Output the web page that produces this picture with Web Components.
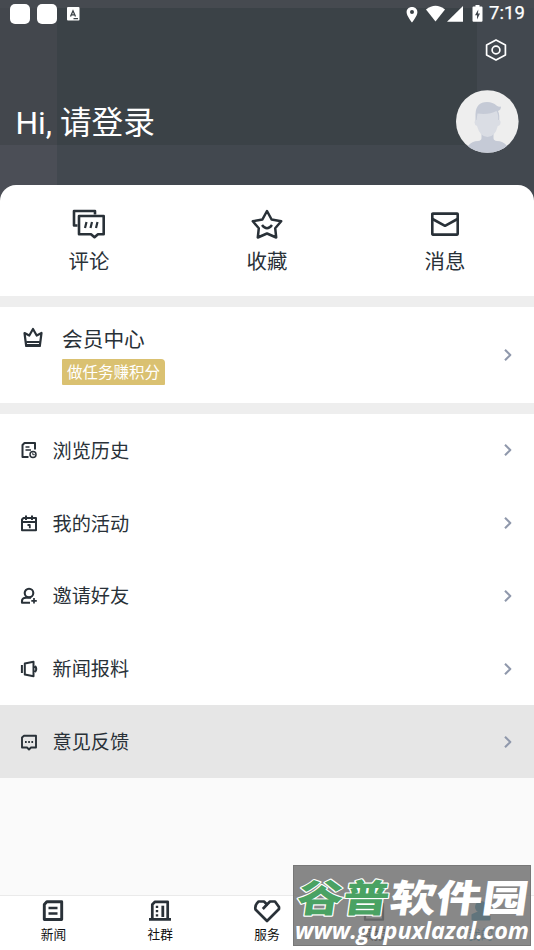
<!DOCTYPE html>
<html lang="zh-CN">
<head>
<meta charset="utf-8">
<title>我的</title>
<style>
body{margin:0;width:534px;height:950px;overflow:hidden;background:#fafafa;color:#293138;font-family:Roboto,"Noto Sans CJK SC",sans-serif}
</style>
</head>
<body>
<profile-page></profile-page>
<script>
const ICONS = {
  comment: ['0 0 34 30', 34, 30, '<path d="M5.500 16.500H2V2H23V5.500"/><path d="M7 7H31.700V25.200H26L22.500 28.200L19 25.200H7Z"/><path d="M14.500 13L13 19M20 13L18.500 19M25.500 13L24 19" stroke-width="2.200"/>', 2.600],
  star: ['0 0 34 30', 34, 30, '<path d="M17 2L21.600 10.500L31.200 12.300L25.200 19.200L26.200 28.500L17 24.500L7.800 28.500L8.800 19.200L2.800 12.300L12.400 10.500Z"/><path d="M12 16Q17 22.500 22 16"/>', 2.5],
  mail: ['0 0 34 30', 34, 30, '<rect x="4.300" y="4.600" width="25.400" height="21" rx=".5"/><path d="M4.500 10L17 16.800L29.500 10"/>', 2.600],
  crown: ['0 0 22 22', 22, 22, '<path d="M4.200 20L2.500 7L7.300 9.500L11 3L14.700 9.500L19.500 7L17.800 20Z"/><path d="M4.200 16H17.800M4.500 19H17.500" stroke-width="1.800"/>', 2.200],
  history: ['0 0 18 18', 18, 18, '<path d="M8.500 16H2.500V4L4.500 2H15V8.500"/><path d="M5.500 6H9.500M5.500 9H11" stroke-width="1.500"/><circle cx="13" cy="13.500" r="3" stroke-width="1.500"/><path d="M12.800 11.500V13.700H14.800" stroke-width="1"/>', 2],
  event: ['0 0 18 18', 18, 18, '<path d="M2 16.200V5.500L3.500 4H16V16.200ZM2 8H16M6 1.500V6M12 1.500V6"/><path d="M7.500 11H9.800V14.200" stroke-width="1.800"/>', 2],
  friend: ['0 0 18 18', 18, 18, '<circle cx="9" cy="6" r="4.300"/><path d="M10 15.800H2V14Q2 10.800 6 10.700H11"/><path d="M14 11V16.500M11.300 13.800H16.800" stroke-width="1.700"/>', 2.1],
  report: ['0 0 18 18', 18, 18, '<path d="M4.800 3.500L13.500 1.800V16.200L4.800 14.500ZM1.900 5V13M15 6Q17.500 9 15 12"/>', 2],
  feedback: ['0 0 18 18', 18, 18, '<path d="M2 14.500V4.500L4 2.800H16V14.500H11L9 16.500L7 14.500Z"/><path d="M5 9H6.700M8.200 9H9.900M11.400 9H13.100" stroke-width="1.800"/>', 1.9],
  news: ['0 0 24 24', 24, 24, '<path d="M3.300 20.500V5.500L5.800 2.800H20.700V20.500Z"/><path d="M7.500 9H16.500M7.500 14.500H16.500" stroke-width="2.400"/>', 2.900],
  group: ['0 0 24 24', 24, 24, '<path d="M4.300 20V5.500L7 2.800H19.700V20M1 20.400H23"/><path d="M9 6.700V18" stroke-dasharray="2.300 2" stroke-width="2.400"/><path d="M14.800 6.700V18" stroke-width="2.800"/>', 2.700],
  heart: ['0 0 28 24', 28, 24, '<path d="M14 22L2.500 10.500Q1.500 6 5.500 2.500H11L14 5.500L17 2.500H22L26 8V10Z"/><path d="M14 5.500L9.800 10"/>', 2.700],
  paper: ['0 0 24 24', 24, 24, '<path d="M3 20.700V5H8L13 2.500V5H21V20.700Z"/><path d="M8 11V16M12 9V16M16 11V14" stroke-width="2"/>', 2.300],
  me: ['0 0 24 24', 24, 24, '<circle cx="12" cy="8" r="5" fill="currentColor"/><path d="M3.500 20.500V16L8 14H16L20.500 16V20.500Z" fill="currentColor"/>', 2],
  chevron: ['0 0 10 14', 10, 14, '<path d="M2 1.800L7.300 7L2 12.200"/>', 2.1],
  settings: ['0 0 24 24', 24, 24, '<path d="M12 1.900L21.400 6.900V17.100L12 22.100L2.600 17.100V6.900Z"/><circle cx="12" cy="12" r="3.900"/>', 1.700]
};

function define(name, css, html) {
  customElements.define(name, class extends HTMLElement {
    connectedCallback() {
      if (this.shadowRoot) return;
      const root = this.attachShadow({mode: 'open'});
      root.innerHTML = '<style>' + css + '</style>' + (typeof html === 'function' ? html(this) : html);
    }
  });
}

define('line-icon', ':host{display:inline-flex;flex:none}svg{display:block;fill:none;stroke:currentColor;stroke-linejoin:round}', el => {
  const [box, w, h, body, sw] = ICONS[el.getAttribute('name')];
  return `<svg viewBox="${box}" width="${w}" height="${h}" stroke-width="${sw}">${body}</svg>`;
});

define('status-bar', `
:host{display:flex;align-items:center;height:27px;padding:0 9px 0 10px;color:#fff;box-sizing:border-box}
.app{width:20px;height:20px;border-radius:5px;background:#fff;margin-right:6.500px}
svg{display:block;flex:none}
.key{margin-left:4px}.space{flex:1}
.time{font:400 18.500px/27px Roboto,sans-serif;letter-spacing:.1px;margin-left:5px;-webkit-text-stroke:.25px #fff}`,
`<span class="app"></span><span class="app"></span>
<svg class="key" width="13" height="14"><rect width="12.500" height="13.500" rx="1" fill="#fff"/><path d="M3.500 9.500L6 3.800L8.500 9.500M4.500 7.800H7.500M6.500 11.700H11" stroke="#3b4247" stroke-width="1.300" fill="none"/></svg>
<span class="space"></span>
<svg width="78" height="20" fill="#fff"><g transform="translate(0 -.5)"><path fill-rule="evenodd" d="M6 3.500C2.800 3.500.6 5.600.6 8.700C.6 12.300 6 19 6 19S11.400 12.300 11.400 8.700C11.400 5.600 9.200 3.500 6 3.500ZM6 6.600A2 2 0 1 1 6 10.600A2 2 0 1 1 6 6.600Z"/><path d="M20 6Q29.500-1.500 39 6L29.500 18Z"/><path d="M57 2.500V18.300H41Z"/><path fill-rule="evenodd" d="M69.500 1.500H73.500V3H75.500Q76.500 3 76.500 4V17.300Q76.500 18.300 75.500 18.300H67.500Q66.500 18.300 66.500 17.300V4Q66.500 3 67.500 3H69.500ZM72.300 6L69 11.700H71V16L74 10H72Z"/></g></svg>
<span class="time">7:19</span>`);

define('user-avatar', ':host{display:block;width:63px;height:63px;flex:none}svg{display:block}',
`<svg width="63" height="63" viewBox="0 0 63 63"><defs><clipPath id="c"><circle cx="31.300" cy="31.500" r="31.300"/></clipPath></defs><g clip-path="url(#c)"><path fill="#eee" d="M0 0H63V63H0Z"/><path fill="#c5cad6" d="M12 64V56Q16 51 22 51Q25.500 50.500 25.500 48V43H37.500V48Q37.500 50.500 41 51Q47 51 51 56V64Z"/><path fill="#c5cad6" d="M19.500 34V24Q20 12 31 12Q37 12 40.500 15.500Q43 17.500 45 16.500Q45 20 42 21Q44 24 43 34Z"/><path fill="#dadde4" d="M21.500 23.500Q33 25 40.500 21Q42.500 24 42.200 30Q44.800 29.500 44.500 33Q44 36 41.800 36Q39 47 31.500 47Q24 47 21 36Q18.700 35.500 18.500 32.500Q18.500 29.500 20.500 30Z"/></g></svg>`);

define('profile-header', `
:host{display:flex;flex-direction:column;height:203px;color:#fff;background:
linear-gradient(#464a50,#464a50) 0 0/534px 8px no-repeat,
linear-gradient(#3b4247,#3b4247) 57px 8px/420px 137px no-repeat,
linear-gradient(#4b4e56,#4b4e56) 0 145px/57px 58px no-repeat,
linear-gradient(#43474d,#43474d) 0 8px/57px 137px no-repeat,#42484f}
.tools{display:flex;justify-content:flex-end;height:46px;padding:11px 26px 0 0;box-sizing:border-box}
.hello{display:flex;align-items:center;justify-content:space-between;height:63px;margin-top:17px;padding:0 15px 0 15.500px}
h1{font-size:31.700px;font-weight:400;line-height:46px;margin:0;padding-top:5px;white-space:nowrap}`,
`<status-bar></status-bar><div class="tools"><line-icon name="settings"></line-icon></div><div class="hello"><h1>Hi, 请登录</h1><user-avatar></user-avatar></div>`);

define('quick-action', `
:host{flex:1;display:flex;flex-direction:column;align-items:center;padding-top:24px;font-size:20.400px;line-height:30px;color:#293138}
.label{margin-top:8px}`,
el => `<line-icon name="${el.getAttribute('icon')}"></line-icon><span class="label"><slot></slot></span>`);

define('quick-actions', ':host{display:flex;height:111px;margin-top:-18px;background:#fff;border-radius:16px 16px 0 0}', '<slot></slot>');

define('member-card', `
:host{display:flex;height:96px;margin:11px 0;background:#fff;padding:0 21px 0 22px;box-sizing:border-box;align-items:center;box-shadow:0 -11px #eee,0 11px #eee}
.crown{align-self:flex-start;margin-top:19px}
.text{flex:1;align-self:flex-start;margin-left:18px;padding-top:18px;display:flex;flex-direction:column;align-items:flex-start}
.name{font-size:20.700px;line-height:30px}
.tag{margin-top:4px;background:#dac171;color:#fff;font-size:15.500px;line-height:28px;height:26px;padding:0 5px;border-radius:1px 4px 1px 1px}
.arrow{color:#9099ac}`,
`<line-icon class="crown" name="crown"></line-icon><div class="text"><span class="name">会员中心</span><span class="tag">做任务赚积分</span></div><line-icon class="arrow" name="chevron"></line-icon>`);

define('menu-row', `
:host{display:flex;align-items:center;height:72.800px;padding:0 21px 0 20px;box-sizing:border-box;background:#fff;font-size:19.200px;line-height:28px}
:host([pressed]){background:#e6e6e6}
.label{flex:1;margin-left:14.500px;padding-top:3px}.arrow{color:#9099ac}`,
el => `<line-icon name="${el.getAttribute('icon')}"></line-icon><span class="label"><slot></slot></span><line-icon class="arrow" name="chevron"></line-icon>`);

define('tab-item', `
:host{flex:1;display:flex;flex-direction:column;align-items:center;padding-top:3px;font-size:12.700px;line-height:18px;color:#293138}
:host([active]){color:#168ab5}
.label{margin-top:3px;color:#101010}:host([active]) .label{color:inherit}`,
el => `<line-icon name="${el.getAttribute('icon')}"></line-icon><span class="label"><slot></slot></span>`);

define('tab-bar', ':host{display:flex;height:55px;background:#fff;border-top:1px solid #eaeaea;box-sizing:border-box;margin-top:auto}', '<slot></slot>');

define('site-mark', `
:host{position:absolute;left:293px;top:865px;width:238px;height:81px;background:rgba(112,112,112,.83);border:1px solid #777;box-sizing:border-box;overflow:hidden}
svg{display:block}text{font-family:"Noto Sans CJK SC",sans-serif;font-weight:900;paint-order:stroke;stroke-linejoin:round}
.url{font-family:"Open Sans",sans-serif;font-weight:700;font-style:italic}`,
`<svg width="236" height="79"><g transform="skewX(-8)"><text x="8" y="46" font-size="38" textLength="92" lengthAdjust="spacingAndGlyphs" fill="#4aa263" stroke="#fff" stroke-width="2.200">谷普</text><text x="101" y="46" font-size="38" textLength="138" lengthAdjust="spacingAndGlyphs" fill="#fff">软件园</text></g><text class="url" x="1" y="73" font-size="22.500" textLength="234" lengthAdjust="spacingAndGlyphs" fill="#fff">www.gupuxlazal.com</text></svg>`);

define('profile-page', ':host{display:flex;flex-direction:column;height:950px;position:relative;background:#fafafa}nav{display:block}',
`<profile-header></profile-header>
<quick-actions><quick-action icon="comment">评论</quick-action><quick-action icon="star">收藏</quick-action><quick-action icon="mail">消息</quick-action></quick-actions>
<member-card></member-card>
<nav><menu-row icon="history">浏览历史</menu-row><menu-row icon="event">我的活动</menu-row><menu-row icon="friend">邀请好友</menu-row><menu-row icon="report">新闻报料</menu-row><menu-row icon="feedback" pressed>意见反馈</menu-row></nav>
<tab-bar><tab-item icon="news">新闻</tab-item><tab-item icon="group">社群</tab-item><tab-item icon="heart">服务</tab-item><tab-item icon="paper">读报</tab-item><tab-item icon="me" active>我的</tab-item></tab-bar>
<site-mark></site-mark>`);
</script>
</body>
</html>
